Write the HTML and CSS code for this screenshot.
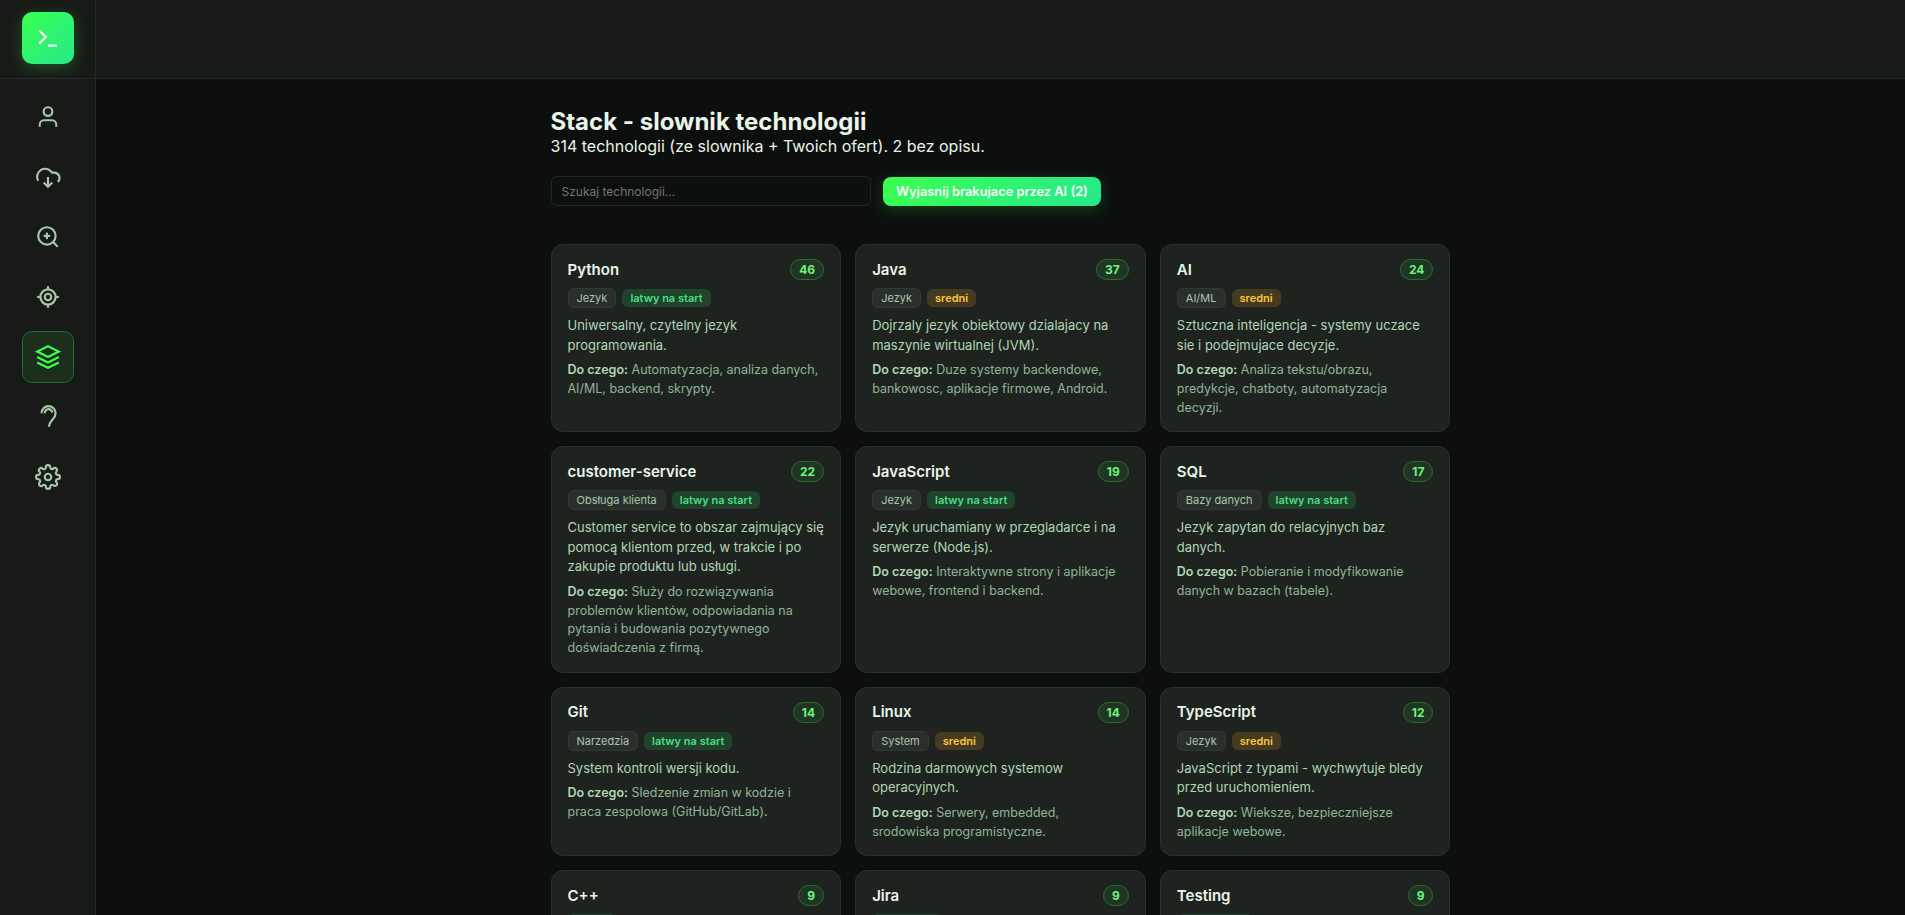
FILE: index.html
```html
<!DOCTYPE html>
<html lang="pl">
<head>
  <meta charset="UTF-8">
  <meta name="viewport" content="width=device-width, initial-scale=1.0">
  <title>Stack - slownik technologii</title>
  <link rel="stylesheet" href="styles.css">
</head>
<body>
  <aside class="sidebar">
    <div class="brand">
      <a class="logo" href="#">
        <svg width="26" height="26" viewBox="0 0 24 24"><path d="m4 17 6-6-6-6"/><path d="M12 19h8"/></svg>
      </a>
    </div>
    <nav class="nav">
      <a class="nav-item" href="#">
        <svg width="26" height="26" viewBox="0 0 24 24"><path d="M20 21v-2a4 4 0 0 0-4-4H8a4 4 0 0 0-4 4v2" transform="translate(.6 0) scale(.95 1)"/><circle cx="12" cy="7" r="4"/></svg>
      </a>
      <a class="nav-item" href="#">
        <svg width="26" height="26" viewBox="0 0 24 24"><path d="M12 12v9"/><path d="m8 17 4 4 4-4"/><path d="M3 15.500A7 7 0 1 1 15.710 8h1.790a4.900 4.900 0 0 1 3.500 8.500"/></svg>
      </a>
      <a class="nav-item" href="#">
        <svg width="26" height="26" viewBox="0 0 24 24"><circle cx="11" cy="11" r="8"/><path d="m21 21-4.350-4.350"/><path d="M11 8v6"/><path d="M8 11h6"/></svg>
      </a>
      <a class="nav-item" href="#">
        <svg width="26" height="26" viewBox="0 0 24 24"><path d="M2 12h3"/><path d="M19 12h3"/><path d="M12 2v3"/><path d="M12 19v3"/><circle cx="12" cy="12" r="7"/><circle cx="12" cy="12" r="3"/></svg>
      </a>
      <a class="nav-item active" href="#">
        <svg width="26" height="26" viewBox="0 0 24 24"><path d="M12 2 2 7l10 5 10-5z"/><path d="m2 12 10 5 10-5"/><path d="m2 17 10 5 10-5"/></svg>
      </a>
      <a class="nav-item" href="#">
        <svg width="26" height="26" viewBox="0 0 24 24"><path d="M6 8.500a6.500 6.500 0 1 1 13 0c0 6-6 6-6 12.500"/><path d="M9 8.500a3.500 3.500 0 0 1 7-.500"/></svg>
      </a>
      <a class="nav-item" href="#">
        <svg width="26" height="26" viewBox="0 0 24 24"><circle cx="12" cy="12" r="3"/><path d="M19.400 15a1.650 1.650 0 0 0 .33 1.820l.06.06a2 2 0 1 1-2.830 2.830l-.06-.06a1.650 1.650 0 0 0-1.820-.33 1.650 1.650 0 0 0-1 1.510V21a2 2 0 0 1-4 0v-.09A1.650 1.650 0 0 0 9 19.400a1.650 1.650 0 0 0-1.820.33l-.06.06a2 2 0 1 1-2.830-2.830l.06-.06a1.650 1.650 0 0 0 .33-1.820 1.650 1.650 0 0 0-1.510-1H3a2 2 0 0 1 0-4h.09A1.650 1.650 0 0 0 4.600 9a1.650 1.650 0 0 0-.33-1.820l-.06-.06a2 2 0 1 1 2.830-2.830l.06.06a1.650 1.650 0 0 0 1.820.33H9a1.650 1.650 0 0 0 1-1.510V3a2 2 0 0 1 4 0v.09a1.650 1.650 0 0 0 1 1.510 1.650 1.650 0 0 0 1.820-.33l.06-.06a2 2 0 1 1 2.830 2.830l-.06.06a1.650 1.650 0 0 0-.33 1.820V9a1.650 1.650 0 0 0 1.510 1H21a2 2 0 0 1 0 4h-.09a1.650 1.650 0 0 0-1.510 1z"/></svg>
      </a>
    </nav>
  </aside>

  <div class="page">
    <header class="topbar"></header>
    <main class="content">
      <h1>Stack - slownik technologii</h1>
      <p class="summary">314 technologii (ze slownika + Twoich ofert). 2 bez opisu.</p>

      <div class="toolbar">
        <input class="search" type="text" placeholder="Szukaj technologii...">
        <button class="btn">Wyjasnij brakujace przez AI (2)</button>
      </div>

      <div class="grid">
        <article class="card">
          <div class="card-head"><h2>Python</h2><span class="count">46</span></div>
          <div class="tags"><span class="tag">Jezyk</span><span class="level easy">latwy na start</span></div>
          <p class="desc">Uniwersalny, czytelny jezyk programowania.</p>
          <p class="use"><strong>Do czego:</strong> Automatyzacja, analiza danych, AI/ML, backend, skrypty.</p>
        </article>
        <article class="card">
          <div class="card-head"><h2>Java</h2><span class="count">37</span></div>
          <div class="tags"><span class="tag">Jezyk</span><span class="level medium">sredni</span></div>
          <p class="desc">Dojrzaly jezyk obiektowy dzialajacy na maszynie wirtualnej (JVM).</p>
          <p class="use"><strong>Do czego:</strong> Duze systemy backendowe, bankowosc, aplikacje firmowe, Android.</p>
        </article>
        <article class="card">
          <div class="card-head"><h2>AI</h2><span class="count">24</span></div>
          <div class="tags"><span class="tag">AI/ML</span><span class="level medium">sredni</span></div>
          <p class="desc">Sztuczna inteligencja - systemy uczace sie i podejmujace decyzje.</p>
          <p class="use"><strong>Do czego:</strong> Analiza tekstu/obrazu, predykcje, chatboty, automatyzacja decyzji.</p>
        </article>

        <article class="card">
          <div class="card-head"><h2>customer-service</h2><span class="count">22</span></div>
          <div class="tags"><span class="tag">Obsługa klienta</span><span class="level easy">latwy na start</span></div>
          <p class="desc">Customer service to obszar zajmujący się pomocą klientom przed, w trakcie i po zakupie produktu lub usługi.</p>
          <p class="use"><strong>Do czego:</strong> Służy do rozwiązywania problemów klientów, odpowiadania na pytania i budowania pozytywnego doświadczenia z firmą.</p>
        </article>
        <article class="card">
          <div class="card-head"><h2>JavaScript</h2><span class="count">19</span></div>
          <div class="tags"><span class="tag">Jezyk</span><span class="level easy">latwy na start</span></div>
          <p class="desc">Jezyk uruchamiany w przegladarce i na serwerze (Node.js).</p>
          <p class="use"><strong>Do czego:</strong> Interaktywne strony i aplikacje webowe, frontend i backend.</p>
        </article>
        <article class="card">
          <div class="card-head"><h2>SQL</h2><span class="count">17</span></div>
          <div class="tags"><span class="tag">Bazy danych</span><span class="level easy">latwy na start</span></div>
          <p class="desc">Jezyk zapytan do relacyjnych baz danych.</p>
          <p class="use"><strong>Do czego:</strong> Pobieranie i modyfikowanie danych w bazach (tabele).</p>
        </article>

        <article class="card">
          <div class="card-head"><h2>Git</h2><span class="count">14</span></div>
          <div class="tags"><span class="tag">Narzedzia</span><span class="level easy">latwy na start</span></div>
          <p class="desc">System kontroli wersji kodu.</p>
          <p class="use"><strong>Do czego:</strong> Sledzenie zmian w kodzie i praca zespolowa (GitHub/GitLab).</p>
        </article>
        <article class="card">
          <div class="card-head"><h2>Linux</h2><span class="count">14</span></div>
          <div class="tags"><span class="tag">System</span><span class="level medium">sredni</span></div>
          <p class="desc">Rodzina darmowych systemow operacyjnych.</p>
          <p class="use"><strong>Do czego:</strong> Serwery, embedded, srodowiska programistyczne.</p>
        </article>
        <article class="card">
          <div class="card-head"><h2>TypeScript</h2><span class="count">12</span></div>
          <div class="tags"><span class="tag">Jezyk</span><span class="level medium">sredni</span></div>
          <p class="desc">JavaScript z typami - wychwytuje bledy przed uruchomieniem.</p>
          <p class="use"><strong>Do czego:</strong> Wieksze, bezpieczniejsze aplikacje webowe.</p>
        </article>

        <article class="card">
          <div class="card-head"><h2>C++</h2><span class="count">9</span></div>
          <div class="tags"><span class="tag"></span></div>
        </article>
        <article class="card">
          <div class="card-head"><h2>Jira</h2><span class="count">9</span></div>
          <div class="tags"><span class="tag wide"></span></div>
        </article>
        <article class="card">
          <div class="card-head"><h2>Testing</h2><span class="count">9</span></div>
          <div class="tags"><span class="tag wider"></span></div>
        </article>
      </div>
    </main>
  </div>
</body>
</html>
```

FILE: styles.css
```css
* {
  margin: 0;
  padding: 0;
  box-sizing: border-box;
}

body {
  font-family: Inter, 'Segoe UI', sans-serif;
  background: #0d0f0e;
  color: #e8f5e9;
  display: flex;
  height: 100vh;
  overflow: hidden;
}

svg {
  fill: none;
  stroke: currentColor;
  stroke-width: 2;
}

.sidebar {
  width: 96px;
  flex-shrink: 0;
  background: #181a17;
  border-right: 1px solid #202b25;
}

.brand {
  height: 79px;
  padding-top: 12px;
  border-bottom: 1px solid #202b25;
  display: flex;
  justify-content: center;
  align-items: flex-start;
}

.logo {
  width: 52px;
  height: 52px;
  border-radius: 10px;
  background: linear-gradient(135deg, #39ff50 0%, #26e98c 100%);
  box-shadow: 0 4px 15px rgba(57, 255, 80, 0.25);
  color: white;
  display: flex;
  align-items: center;
  justify-content: center;
}

.nav {
  display: flex;
  flex-direction: column;
  align-items: center;
  gap: 8px;
  padding-top: 12px;
}

.nav-item {
  width: 52px;
  height: 52px;
  border: 1px solid transparent;
  border-radius: 10px;
  color: #a5c8a8;
  display: flex;
  align-items: center;
  justify-content: center;
}

.nav-item.active {
  background: #1c2f1d;
  border-color: #236b2e;
  color: #39ff50;
}

.page {
  flex: 1;
  min-width: 0;
}

.topbar {
  height: 79px;
  background: #181a17;
  border-bottom: 1px solid #202b25;
}

.content {
  width: 900px;
  margin: 0 auto;
  padding-top: 28px;
}

h1 {
  font-size: 24px;
  font-weight: 700;
  line-height: 29px;
}

.summary {
  font-size: 16px;
  line-height: 20px;
}

.toolbar {
  display: flex;
  align-items: flex-end;
  gap: 12px;
  margin: 20px 0 38px;
}

.search {
  width: 320px;
  height: 30px;
  padding: 0 10px;
  background: transparent;
  border: 1px solid #1c2620;
  border-radius: 6px;
  font-family: inherit;
  font-size: 12px;
}

.search::placeholder {
  color: #757575;
}

.btn {
  height: 29px;
  padding: 0 13.5px;
  border: none;
  border-radius: 8px;
  background: linear-gradient(135deg, #39ff50 0%, #26e98c 100%);
  box-shadow: 0 4px 15px rgba(57, 255, 80, 0.2);
  color: white;
  font-family: inherit;
  font-size: 12.8px;
  font-weight: 600;
}

.grid {
  display: grid;
  grid-template-columns: repeat(3, 1fr);
  gap: 14px;
}

.card {
  background: #1f2320;
  border: 1px solid #25332b;
  border-radius: 12px;
  padding: 14px 16px;
}

.card-head {
  display: flex;
  justify-content: space-between;
  align-items: center;
  margin-bottom: 8px;
}

.card-head h2 {
  font-size: 15px;
  font-weight: 600;
  line-height: 18px;
}

.count {
  height: 21px;
  padding: 0 8px;
  border: 1px solid #26702f;
  border-radius: 999px;
  background: #213524;
  color: #69f577;
  font-size: 12px;
  font-weight: 700;
  line-height: 19px;
}

.tags {
  display: flex;
  align-items: center;
  gap: 6px;
  height: 20px;
  margin-bottom: 8px;
}

.tag,
.level {
  padding: 0 8px;
  border-radius: 6px;
  font-size: 11px;
  line-height: 18px;
}

.tag {
  min-width: 48px;
  min-height: 20px;
  background: #2b2f2c;
  border: 1px solid #2c3c33;
  color: #a5c8a8;
}

.tag.wide {
  min-width: 70px;
}

.tag.wider {
  min-width: 76px;
}

.level {
  font-weight: 600;
}

.easy {
  background: #20432e;
  color: #4ade80;
}

.medium {
  background: #453b20;
  color: #fdc544;
}

.desc {
  margin-bottom: 6px;
  font-size: 13px;
  line-height: 1.5;
  color: #b0d6b4;
}

.use {
  font-size: 12.5px;
  line-height: 1.5;
  color: #8fb595;
}

.use strong {
  font-weight: 600;
  color: #b0d6b4;
}
```
